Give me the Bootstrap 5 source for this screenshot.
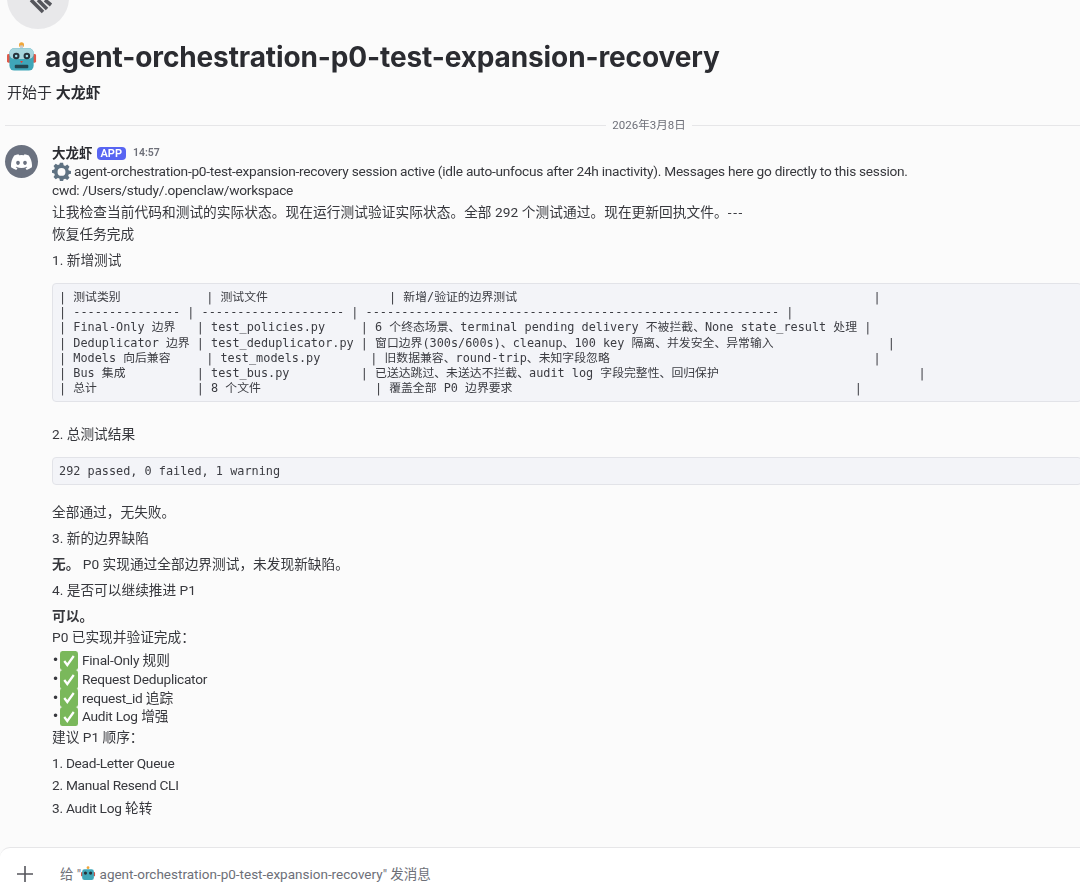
<!doctype html>
<html lang="zh">
<head>
<meta charset="utf-8">
<title>agent-orchestration</title>
<link href="https://cdn.jsdelivr.net/npm/bootstrap@5.3.0/dist/css/bootstrap.min.css" rel="stylesheet">
<style>
html,body{height:891px;overflow:hidden}
body{background:#fbfbfb;color:#37383d;font-family:Roboto,"Noto Sans CJK SC",sans-serif;font-size:13.7px;line-height:18px;font-variant-ligatures:none}
.page-h{height:847px;overflow:hidden;padding-left:7px;will-change:opacity}
.top-ava{width:62px;height:62px;border-radius:50%;background:#e8e8ea;margin-top:-33px}
.chan-title{font-family:Inter,"Noto Sans CJK SC",sans-serif;font-size:28px;line-height:38px;font-weight:700;color:#2b2c31;margin:9px 0 0;letter-spacing:-.12px;gap:7px}
.chan-sub{font-size:15px;line-height:20px;margin-top:7px;color:#2f3035}
.chan-sub b{font-weight:700;color:#2b2c31}
.date-div{margin:14px -213px 0 -2px;height:16px;color:#6d6f78;font-size:11.5px;gap:6px}
.date-div i{flex:1;height:1px;background:#e6e6e8}
.msg{margin-top:11px;gap:14px;margin-left:-2px}
.ava{width:33px;height:33px;border-radius:50%;background:#6b7280;flex:none;margin-top:1px}
.body-m{flex:1;min-width:0;margin-right:-2px}
.uname{font-size:13.5px;font-weight:600;color:#2b2c31;gap:4px;line-height:18px}
.apptag{background:#5865f2;color:#fff;font-size:11px;font-weight:600;line-height:13px;padding:0 4px;border-radius:4px}
.tm{font-size:10.5px;color:#6d6f78;margin-left:3px}
.ln{margin:0;white-space:nowrap}
.gear-l{height:18px;gap:3px}
.lead-l{letter-spacing:.05px}
.dashes{letter-spacing:1.6px}
.code-b{background:#f3f4f8;border:1px solid #e2e3e8;border-radius:4px;margin:0;font-family:"DejaVu Sans Mono","Noto Sans CJK SC",monospace;font-size:11.85px;line-height:15.2px;color:#3b3c42;overflow:hidden;padding:6px 6px}
.chk{gap:4px;height:18.7px;align-items:center}
.dotc{font-family:"DejaVu Sans",sans-serif;font-size:12px;width:4px;line-height:1}
.composer{height:44px;background:#fff;border-top:1px solid #e6e6e8;border-radius:10px 0 0 0;color:#6d6f78;padding-left:17px;padding-top:8px;font-size:13.5px;gap:27px}
.narrow{letter-spacing:-.27px}
</style>
</head>
<body>
<div class="page-h">
  <div class="top-ava d-flex overflow-hidden">
    <svg width="62" height="62" viewBox="0 0 62 62"><g stroke="#55565c" stroke-width="3.600" fill="none"><path d="M24 33L36 45"/><path d="M31 33L40 42"/><path d="M38 33L44 38"/></g></svg>
  </div>
  <h1 class="chan-title d-flex align-items-center">
    <svg width="31" height="32" viewBox="0 0 32 32" class="flex-none"><circle cx="15" cy="3.500" r="2.600" fill="#f0a63a"/><rect x="13.500" y="4" width="3" height="4" fill="#c9ccd0"/><rect x="0" y="13" width="4" height="9" rx="1.500" fill="#e05a4a"/><rect x="26" y="13" width="4" height="9" rx="1.500" fill="#e05a4a"/><rect x="2.500" y="7" width="25" height="23" rx="5" fill="#3fa6b8"/><rect x="2.500" y="7" width="25" height="11" rx="5" fill="#a7d5dd"/><circle cx="9.500" cy="15" r="3.400" fill="#27323a"/><circle cx="20.500" cy="15" r="3.400" fill="#27323a"/><circle cx="9.500" cy="15" r="1.300" fill="#9fe3f0"/><circle cx="20.500" cy="15" r="1.300" fill="#9fe3f0"/><path d="M13.500 20h3l-1.500 2.500z" fill="#d9443b"/><rect x="8" y="24" width="14" height="3.500" rx="1" fill="#22464f"/></svg>
    <span>agent-orchestration-p0-test-expansion-recovery</span>
  </h1>
  <div class="chan-sub">开始于 <b>大龙虾</b></div>
  <div class="date-div d-flex align-items-center"><i></i><span>2026年3月8日</span><i></i></div>
  <div class="msg d-flex">
    <div class="ava d-flex align-items-center justify-content-center">
      <svg width="21" height="16" viewBox="0 0 24 18"><path fill="#fff" d="M20.300 1.500A19.800 19.800 0 0 0 15.400 0c-.2.400-.5.900-.6 1.300a18.300 18.300 0 0 0-5.600 0C9.100.9 8.800.4 8.600 0a19.700 19.700 0 0 0-4.900 1.500C.6 6.100-.3 10.600.1 15a20 20 0 0 0 6 3c.5-.7.9-1.400 1.300-2.100-.7-.3-1.400-.6-2-1l.5-.4a14.200 14.200 0 0 0 12.200 0l.5.4c-.6.400-1.300.7-2 1 .4.700.8 1.400 1.300 2.100a20 20 0 0 0 6-3c.5-5.100-.8-9.600-3.600-13.500zM8 12.300c-1.200 0-2.100-1.100-2.100-2.400S6.800 7.500 8 7.500s2.200 1.100 2.100 2.400c0 1.300-.9 2.400-2.100 2.400zm8 0c-1.200 0-2.100-1.100-2.100-2.400s.9-2.400 2.100-2.400 2.200 1.100 2.100 2.400c0 1.300-.9 2.400-2.100 2.400z"/></svg>
    </div>
    <div class="body-m">
      <div class="uname d-flex align-items-center"><span>大龙虾</span><span class="apptag">APP</span><span class="tm">14:57</span></div>
      <div class="ln gear-l d-flex align-items-center">
        <svg width="19" height="19" viewBox="0 0 24 24" class="flex-none"><path fill="#5f7282" fill-rule="evenodd" d="M10 1h4l.7 3.100 1.900.8 2.700-1.700 2.800 2.800-1.700 2.700.8 1.900L24 11.300v3.400l-2.800.7-.8 1.900 1.700 2.700-2.800 2.800-2.700-1.700-1.900.8L14 24h-4l-.7-3.100-1.900-.8-2.700 1.700-2.800-2.800 1.700-2.700-.8-1.900L0 13.700v-3.400l2.800-.7.8-1.900-1.700-2.700 2.800-2.800 2.700 1.700 1.900-.8zM12 7.500a5 5 0 1 0 0 10 5 5 0 0 0 0-10z"/></svg>
        <span class="narrow">agent-orchestration-p0-test-expansion-recovery session active (idle auto-unfocus after 24h inactivity). Messages here go directly to this session.</span>
      </div>
      <p class="ln narrow" style="margin-top:1px">cwd: /Users/study/.openclaw/workspace</p>
      <p class="ln lead-l" style="margin-top:4px">让我检查当前代码和测试的实际状态。现在运行测试验证实际状态。全部 292 个测试通过。现在更新回执文件。<span class="dashes">---</span></p>
      <p class="ln" style="margin-top:4px">恢复任务完成</p>
      <p class="ln" style="margin-top:8px">1. 新增测试</p>
      <pre class="code-b" style="margin-top:14px;height:119px">| 测试类别            | 测试文件                 | 新增/验证的边界测试                                                  |
| --------------- | -------------------- | ---------------------------------------------------------- |
| Final-Only 边界   | test_policies.py     | 6 个终态场景、terminal pending delivery 不被拦截、None state_result 处理 |
| Deduplicator 边界 | test_deduplicator.py | 窗口边界(300s/600s)、cleanup、100 key 隔离、并发安全、异常输入                |
| Models 向后兼容     | test_models.py       | 旧数据兼容、round-trip、未知字段忽略                                     |
| Bus 集成          | test_bus.py          | 已送达跳过、未送达不拦截、audit log 字段完整性、回归保护                            |
| 总计              | 8 个文件                | 覆盖全部 P0 边界要求                                                |</pre>
      <p class="ln" style="margin-top:23px">2. 总测试结果</p>
      <pre class="code-b" style="margin-top:14px;height:28px">292 passed, 0 failed, 1 warning</pre>
      <p class="ln" style="margin-top:18px">全部通过，无失败。</p>
      <p class="ln" style="margin-top:8px">3. 新的边界缺陷</p>
      <p class="ln" style="margin-top:8px"><b>无。</b> P0 实现通过全部边界测试，未发现新缺陷。</p>
      <p class="ln" style="margin-top:8px">4. 是否可以继续推进 P1</p>
      <p class="ln" style="margin-top:8px"><b>可以。</b></p>
      <p class="ln" style="margin-top:3px">P0 已实现并验证完成：</p>
      <div style="margin-top:5px">
        <div class="chk d-flex"><span class="dotc">•</span><svg width="18" height="19" viewBox="0 0 19 19" preserveAspectRatio="none"><rect width="19" height="19" rx="2.500" fill="#7ab85b"/><path d="M4.500 10l3.200 4 6.800-9" stroke="#fff" stroke-width="2.400" fill="none"/></svg><span><span class="narrow">Final-Only</span> 规则</span></div>
        <div class="chk d-flex"><span class="dotc">•</span><svg width="18" height="19" viewBox="0 0 19 19" preserveAspectRatio="none"><rect width="19" height="19" rx="2.500" fill="#7ab85b"/><path d="M4.500 10l3.200 4 6.800-9" stroke="#fff" stroke-width="2.400" fill="none"/></svg><span class="narrow">Request Deduplicator</span></div>
        <div class="chk d-flex"><span class="dotc">•</span><svg width="18" height="19" viewBox="0 0 19 19" preserveAspectRatio="none"><rect width="19" height="19" rx="2.500" fill="#7ab85b"/><path d="M4.500 10l3.200 4 6.800-9" stroke="#fff" stroke-width="2.400" fill="none"/></svg><span><span class="narrow">request_id</span> 追踪</span></div>
        <div class="chk d-flex"><span class="dotc">•</span><svg width="18" height="19" viewBox="0 0 19 19" preserveAspectRatio="none"><rect width="19" height="19" rx="2.500" fill="#7ab85b"/><path d="M4.500 10l3.200 4 6.800-9" stroke="#fff" stroke-width="2.400" fill="none"/></svg><span><span class="narrow">Audit Log</span> 增强</span></div>
      </div>
      <p class="ln" style="margin-top:2px">建议 P1 顺序：</p>
      <p class="ln narrow" style="margin-top:8px">1. Dead-Letter Queue</p>
      <p class="ln narrow" style="margin-top:4px">2. Manual Resend CLI</p>
      <p class="ln" style="margin-top:5px"><span class="narrow">3. Audit Log</span> 轮转</p>
    </div>
  </div>
</div>
<div class="composer d-flex align-items-center">
  <svg width="16" height="16" viewBox="0 0 16 16" class="flex-none"><path d="M8 0v16M0 8h16" stroke="#55565c" stroke-width="1.600"/></svg>
  <span class="d-flex align-items-center"><span>给 "</span><svg width="15" height="15" viewBox="0 0 32 32" class="flex-none"><circle cx="15" cy="3.500" r="3" fill="#f0a63a"/><rect x="0" y="13" width="30" height="9" rx="2" fill="#c9564a"/><rect x="2.500" y="7" width="25" height="23" rx="5" fill="#3fa6b8"/><circle cx="9.500" cy="15" r="3.400" fill="#27323a"/><circle cx="20.500" cy="15" r="3.400" fill="#27323a"/></svg><span>&nbsp;agent-orchestration-p0-test-expansion-recovery" 发消息</span></span>
</div>
</body>
</html>
